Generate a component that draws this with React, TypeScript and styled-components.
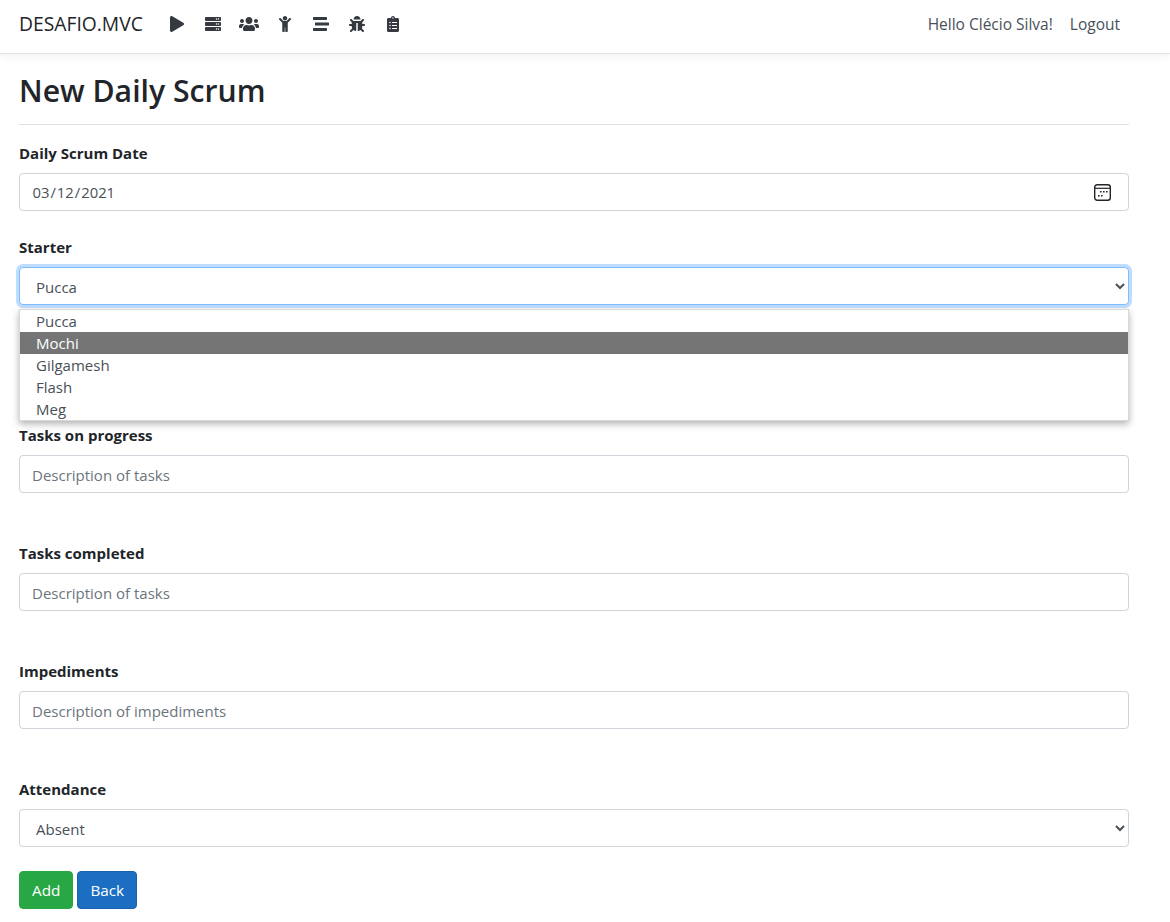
import React from "react";
import styled, { createGlobalStyle } from "styled-components";
import { FaBug, FaChild, FaClipboardList, FaPlay, FaServer, FaStream, FaUsers } from "react-icons/fa";

const GlobalStyle = createGlobalStyle`
    html, body {
        margin: 0;
        background: #fff;
        font-family: "Open Sans", "Noto Sans", sans-serif;
        font-size: 15px;
        color: #212529;
    }
    * {
        box-sizing: border-box;
    }
`;

const Navbar = styled.nav`
    display: flex;
    align-items: center;
    height: 54px;
    padding: 0 50px 6px 19px;
    border-bottom: 1px solid #e3e3e3;
    box-shadow: 0 3px 8px rgba(0, 0, 0, 0.05);
`;

const Brand = styled.a`
    font-size: 19.3px;
    margin-right: 26px;
    color: #212529;
`;

const IconLink = styled.a<{ $size: number }>`
    display: flex;
    width: 16px;
    justify-content: center;
    margin-right: 20px;
    color: #343a40;
    font-size: ${(p) => p.$size}px;
    svg {
        flex-shrink: 0;
    }
`;

const NavRight = styled.div`
    display: flex;
    align-items: center;
    margin-left: auto;
    gap: 17px;
    font-size: 15.5px;
    color: #495057;
`;

const Main = styled.main`
    padding: 0 41px 13px 19px;
`;

const Title = styled.h2`
    margin: 0;
    padding: 16px 0 13px;
    font-size: 30.2px;
    line-height: 41px;
    font-weight: 600;
    border-bottom: 1px solid #dee2e6;
`;

const Form = styled.form`
    padding-top: 17px;
`;

const Field = styled.div<{ $after: number }>`
    position: relative;
    margin-bottom: ${(p) => p.$after}px;
`;

const Label = styled.label`
    display: block;
    height: 24px;
    margin-bottom: 7px;
    font-size: 15px;
    line-height: 22px;
    font-weight: 700;
    color: #212529;
`;

const Input = styled.input`
    display: block;
    width: 100%;
    height: 38px;
    padding: 7px 12px 5px;
    border: 1px solid #ced4da;
    border-radius: 4px;
    font: inherit;
    font-size: 15px;
    color: #495057;
    &::placeholder {
        color: #6c757d;
    }
`;

const DateInput = styled(Input)`
    font-size: 14.8px;
    padding: 6px 11.5px;
    &::-webkit-calendar-picker-indicator {
        opacity: 0;
    }
`;

const CalendarIcon = styled.svg`
    position: absolute;
    right: 18px;
    bottom: 10px;
    width: 17px;
    height: 17px;
    pointer-events: none;
`;

const Select = styled.select<{ $focus?: boolean }>`
    display: block;
    width: 100%;
    height: 38px;
    padding: 7px 12px 5px;
    border: 1px solid ${(p) => (p.$focus ? "#80bdff" : "#ced4da")};
    border-radius: 4px;
    background: #fff;
    font: inherit;
    font-size: 15px;
    color: #495057;
    box-shadow: ${(p) => (p.$focus ? "0 0 0 3px rgba(0, 123, 255, 0.25)" : "none")};
`;

const Dropdown = styled.ul`
    position: absolute;
    top: 73px;
    left: 0;
    right: 0;
    margin: 0;
    padding: 0;
    list-style: none;
    background: #fff;
    border: 1px solid #d8d8d8;
    box-shadow: 0 3px 7px rgba(0, 0, 0, 0.3);
    z-index: 2;
`;

const Option = styled.li<{ $active?: boolean }>`
    height: 22px;
    padding-left: 16px;
    font-size: 15px;
    line-height: 22px;
    color: ${(p) => (p.$active ? "#fff" : "#495057")};
    background: ${(p) => (p.$active ? "#757575" : "transparent")};
`;

const Actions = styled.div`
    display: flex;
    gap: 4px;
`;

const Button = styled.button<{ $bg: string; $edge: string }>`
    height: 38px;
    padding: 0 12px;
    border: 1px solid ${(p) => p.$edge};
    border-radius: 4px;
    background: ${(p) => p.$bg};
    color: #fff;
    font: inherit;
    font-size: 15.3px;
`;

const options = ["Pucca", "Mochi", "Gilgamesh", "Flash", "Meg"];
const icons = [
    { Icon: FaPlay, size: 16 },
    { Icon: FaServer, size: 16 },
    { Icon: FaUsers, size: 20 },
    { Icon: FaChild, size: 16 },
    { Icon: FaStream, size: 16 },
    { Icon: FaBug, size: 16 },
    { Icon: FaClipboardList, size: 16 },
];

export default function App() {
    return (
        <>
            <GlobalStyle />
            <Navbar>
                <Brand>DESAFIO.MVC</Brand>
                {icons.map(({ Icon, size }, i) => (
                    <IconLink key={i} $size={size}>
                        <Icon />
                    </IconLink>
                ))}
                <NavRight>
                    <span>Hello Clécio Silva!</span>
                    <span>Logout</span>
                </NavRight>
            </Navbar>
            <Main>
                <Title>New Daily Scrum</Title>
                <Form>
                    <Field $after={25}>
                        <Label>Daily Scrum Date</Label>
                        <DateInput type="date" defaultValue="2021-03-12" />
                        <CalendarIcon viewBox="0 0 17 17" fill="none">
                            <rect x="0.7" y="0.7" width="15.6" height="15.6" rx="2.5" stroke="#212529" strokeWidth="1.4" />
                            <path d="M1 4.3h15" stroke="#212529" strokeWidth="1.2" />
                            <path
                                d="M6 7h1.6v1.6H6zM9 7h1.6v1.6H9zM12 7h1.6v1.6H12zM4 11h1.6v1.6H4zM7 11h1.6v1.6H7z"
                                fill="#212529"
                            />
                        </CalendarIcon>
                    </Field>
                    <Field $after={119}>
                        <Label>Starter</Label>
                        <Select $focus defaultValue="Pucca">
                            {options.map((o) => (
                                <option key={o}>{o}</option>
                            ))}
                        </Select>
                        <Dropdown>
                            {options.map((o) => (
                                <Option key={o} $active={o === "Mochi"}>
                                    {o}
                                </Option>
                            ))}
                        </Dropdown>
                    </Field>
                    <Field $after={49}>
                        <Label>Tasks on progress</Label>
                        <Input placeholder="Description of tasks" />
                    </Field>
                    <Field $after={49}>
                        <Label>Tasks completed</Label>
                        <Input placeholder="Description of tasks" />
                    </Field>
                    <Field $after={49}>
                        <Label>Impediments</Label>
                        <Input placeholder="Description of impediments" />
                    </Field>
                    <Field $after={24}>
                        <Label>Attendance</Label>
                        <Select defaultValue="Absent">
                            <option>Absent</option>
                            <option>Present</option>
                        </Select>
                    </Field>
                    <Actions>
                        <Button type="button" $bg="#28a745" $edge="#28a745">Add</Button>
                        <Button type="button" $bg="#1b6ec2" $edge="#1861ac">Back</Button>
                    </Actions>
                </Form>
            </Main>
        </>
    );
}
